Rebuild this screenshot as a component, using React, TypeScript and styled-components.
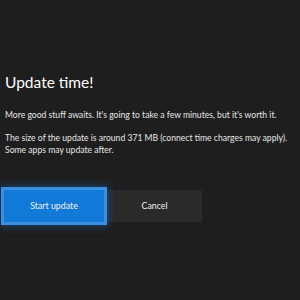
import React from "react";
import styled, { createGlobalStyle } from "styled-components";

const Global = createGlobalStyle`
  html, body { margin: 0; padding: 0; background: #1e1e1e; }
  body { font-family: "Lato", "Open Sans", sans-serif; }
`;

const Screen = styled.div`
  width: 300px;
  height: 300px;
  box-sizing: border-box;
  background: #1e1e1e;
  padding: 70px 0 0 5px;
  display: flex;
  flex-direction: column;
`;

const Title = styled.h1`
  margin: 0;
  font-weight: 400;
  font-size: 15.5px;
  line-height: 24px;
  color: #ffffff;
`;

const Body = styled.p<{ $top: number }>`
  margin: ${(p) => p.$top}px 0 0 0;
  font-size: 8.6px;
  line-height: 12.5px;
  color: #e6e6e6;
  white-space: nowrap;
`;

const Actions = styled.div`
  display: flex;
  align-items: center;
  margin-top: 30px;
  margin-left: -4px;
`;

const Button = styled.button<{ $primary?: boolean }>`
  box-sizing: border-box;
  font-family: inherit;
  font-size: 8.8px;
  color: #f2f2f2;
  border: none;
  cursor: pointer;
  display: flex;
  align-items: center;
  justify-content: center;
  width: ${(p) => (p.$primary ? "106px" : "95px")};
  height: ${(p) => (p.$primary ? "38px" : "32px")};
  background: ${(p) => (p.$primary ? "#1179d8" : "#2a2a2a")};
  outline: ${(p) => (p.$primary ? "3px solid #3a8fe0" : "none")};
  outline-offset: -3px;
  box-shadow: ${(p) => (p.$primary ? "0 0 8px 1px rgba(20,120,220,0.45)" : "none")};
  position: relative;
  z-index: ${(p) => (p.$primary ? 1 : 0)};
`;

export default function App() {
  return (
    <>
      <Global />
      <Screen>
        <Title>Update time!</Title>
        <Body $top={15}>
          More good stuff awaits. It's going to take a few minutes, but it's worth it.
        </Body>
        <Body $top={10}>
          The size of the update is around 371 MB (connect time charges may apply).
          <br />
          Some apps may update after.
        </Body>
        <Actions>
          <Button $primary>Start update</Button>
          <Button>Cancel</Button>
        </Actions>
      </Screen>
    </>
  );
}
